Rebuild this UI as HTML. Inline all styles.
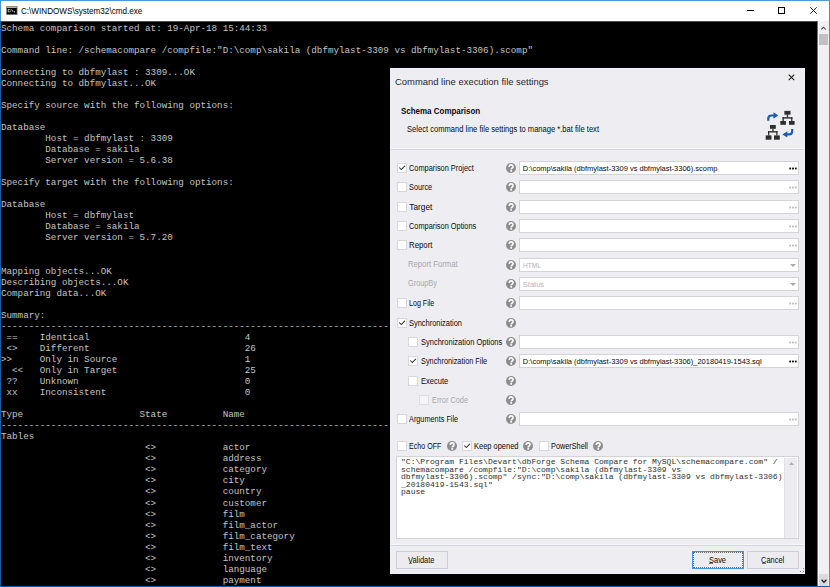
<!DOCTYPE html>
<html><head><meta charset="utf-8">
<style>
*{margin:0;padding:0;box-sizing:border-box}
html,body{width:830px;height:587px;overflow:hidden;background:#fff;position:relative;font-family:"Liberation Sans",sans-serif}
.abs{position:absolute}
#frame{position:absolute;left:0;top:0;width:830px;height:587px;border:1px solid #4a97df;border-right-color:#3d90da;border-left-color:#135fa8;border-bottom-color:#125ca4}
.t{position:absolute;white-space:pre;line-height:12px;transform-origin:0 0;color:#0a0a0a}
#con{position:absolute;left:1px;top:21px;width:817px;height:565px;background:#000;overflow:hidden}
#con pre{position:absolute;left:0;top:1.5px;font-family:"Liberation Mono",monospace;font-size:9.24px;line-height:11.05px;color:#c4c4c4;white-space:pre}
#sb{position:absolute;left:819px;top:21px;width:10px;height:565px;background:#f0f0f0}
#dlg{position:absolute;left:390px;top:68px;width:415px;height:506px;background:#eeeef2;box-shadow:inset 0 0 0 1px #eef0fc;color:#1e1e1e}
#dlg .cb{position:absolute;width:10px;height:10px;background:#fff;border:1px solid #d8d8dc}
#dlg .cb.dis{background:#f4f4f6;border-color:#e0e0e4}
#dlg .help{position:absolute}
#dlg .tb{position:absolute;left:129px;width:280px;height:14px;background:#fff;border:1px solid #d4d4d8}
#dlg .dots{position:absolute;left:268.5px;top:5px}
#dlg .dots i{position:absolute;top:0;width:1.6px;height:1.6px}
#dlg .arr{position:absolute;left:270px;top:5px}
#dlg .sep{position:absolute;left:1px;width:413px;height:1px;background:#d3d5e2;box-shadow:0 -1px 0 #f6f6f9}
#dlg .btn{position:absolute;top:483px;width:52px;height:18px;border:1px solid #ccced8;background:#ececf0}
#ta{position:absolute;left:6px;top:388px;width:403px;height:83px;background:#fff;border:1px solid #d4d4d8}
#ta pre{position:absolute;left:4px;top:1px;font-family:"Liberation Mono",monospace;font-size:8.05px;line-height:7.6px;color:#303030;white-space:pre}
#tasb{position:absolute;left:387px;top:1px;width:13px;height:80px;background:#ececf0;border-left:1px solid #e0e0e4}
</style></head><body>
<div id="frame"></div><div class="abs" style="left:0;top:0;width:1px;height:21px;background:#4a97df"></div>
<svg class="abs" style="left:6px;top:6px" width="12" height="9" viewBox="0 0 12 9">
<rect x="0.5" y="0.5" width="10.6" height="8.2" fill="#000" stroke="#8a8a8a" stroke-width="0.7"/>
<rect x="0.9" y="0.9" width="9.8" height="0.9" fill="#dcdcdc"/>
<path d="M3.7 3.5H2.2V5.9H3.7M5.5 3.4L7.2 6" fill="none" stroke="#d8d8d8" stroke-width="0.9"/>
<rect x="4.2" y="3.6" width="0.8" height="0.8" fill="#ccc"/><rect x="4.2" y="5.2" width="0.8" height="0.8" fill="#ccc"/><rect x="8" y="5.2" width="1.1" height="1.1" fill="#ddd"/>
</svg>
<div class="t" style="left:20.9px;top:4.7px;font-size:9.45px;transform:scaleX(0.86);color:#000;">C:\WINDOWS\system32\cmd.exe</div>
<div class="abs" style="left:747px;top:10px;width:7px;height:1px;background:#000"></div>
<div class="abs" style="left:778px;top:7px;width:7px;height:7px;border:1px solid #000"></div>
<svg class="abs" style="left:810px;top:7px" width="7" height="7" viewBox="0 0 7 7"><path d="M0.3 0.3L6.7 6.7M6.7 0.3L0.3 6.7" stroke="#000" stroke-width="0.9"/></svg>
<div id="con"><pre>Schema comparison started at: 19-Apr-18 15:44:33

Command line: /schemacompare /compfile:"D:\comp\sakila (dbfmylast-3309 vs dbfmylast-3306).scomp"

Connecting to dbfmylast : 3309...OK
Connecting to dbfmylast...OK

Specify source with the following options:

Database
        Host = dbfmylast : 3309
        Database = sakila
        Server version = 5.6.38

Specify target with the following options:

Database
        Host = dbfmylast
        Database = sakila
        Server version = 5.7.20


Mapping objects...OK
Describing objects...OK
Comparing data...OK

Summary:
--------------------------------------------------------------------------------------------------------------------------------------------
 ==    Identical                            4
 &lt;&gt;    Different                            26
&gt;&gt;     Only in Source                       1
  &lt;&lt;   Only in Target                       25
 ??    Unknown                              0
 xx    Inconsistent                         0

Type                     State          Name
--------------------------------------------------------------------------------------------------------------------------------------------
Tables
                          &lt;&gt;            actor
                          &lt;&gt;            address
                          &lt;&gt;            category
                          &lt;&gt;            city
                          &lt;&gt;            country
                          &lt;&gt;            customer
                          &lt;&gt;            film
                          &lt;&gt;            film_actor
                          &lt;&gt;            film_category
                          &lt;&gt;            film_text
                          &lt;&gt;            inventory
                          &lt;&gt;            language
                          &lt;&gt;            payment</pre><div style="position:absolute;left:0;top:0;width:817px;height:1px;background:#505050"></div><div style="position:absolute;left:816px;top:0;width:1px;height:565px;background:#707070"></div></div>
<div id="sb"><div style="position:absolute;left:0;top:13px;width:9px;height:11px;background:#c1c1c1"></div>
<svg style="position:absolute;left:2px;top:4.5px" width="5" height="4" viewBox="0 0 5 4"><path d="M0.4 3.5L2.5 1.2L4.6 3.5" fill="none" stroke="#4a4a4a" stroke-width="1.1"/></svg>
<div style="position:absolute;left:0;top:553px;width:9px;height:12px;background:#dadada"></div>
<svg style="position:absolute;left:1.5px;top:557.5px" width="6" height="5" viewBox="0 0 6 5"><path d="M0.6 0.8L3 3.4L5.4 0.8" fill="none" stroke="#1a1a1a" stroke-width="1.3"/></svg></div>
<div id="dlg">
<div class="t" style="left:5.4px;top:7.6px;font-size:9.9px;transform:scaleX(0.955);color:#1e1e2e;">Command line execution file settings</div>
<svg style="position:absolute;left:398px;top:6px" width="7" height="7" viewBox="0 0 7 7"><path d="M0.7 0.7L6.2 6.2M6.2 0.7L0.7 6.2" stroke="#1e1e1e" stroke-width="1.1"/></svg>
<div class="t" style="left:11.4px;top:37px;font-size:8.3px;transform:scaleX(0.96);font-weight:bold;">Schema Comparison</div>
<div class="t" style="left:16.7px;top:55px;font-size:8.3px;transform:scaleX(0.913);">Select command line file settings to manage *.bat file text</div>
<svg style="position:absolute;left:375px;top:42px" width="30" height="30" viewBox="0 0 30 30">
<g fill="#2e2e2e">
<rect x="19.4" y="0.9" width="6.1" height="3.8"/><rect x="21.8" y="4.5" width="1.3" height="3"/><rect x="17.5" y="7.2" width="9.9" height="1.4"/><rect x="17.5" y="7.2" width="1.3" height="3.9"/><rect x="26.1" y="7.2" width="1.3" height="3.9"/>
<rect x="15.3" y="11" width="5.6" height="3.8"/><rect x="24" y="11" width="5.6" height="3.8"/>
<rect x="5" y="15" width="5.8" height="3.8"/><rect x="7.3" y="18.6" width="1.3" height="2.7"/><rect x="3" y="21.1" width="9.5" height="1.4"/><rect x="3" y="21.1" width="1.3" height="4.4"/><rect x="11.2" y="21.1" width="1.3" height="4.4"/>
<rect x="0.7" y="25.4" width="5.8" height="4.3"/><rect x="9" y="25.4" width="5.8" height="4.3"/>
</g>
<g fill="none" stroke="#1a5cb5" stroke-width="2.2"><path d="M3.3 10.8V8.6Q3.3 5.5 6.6 5.5H9.5"/><path d="M27.2 18.9V21.3Q27.2 24.4 24 24.4H21.5"/></g>
<g fill="#1a5cb5"><path d="M8.5 2.3L13.4 5.5L8.5 8.7Z"/><path d="M22.3 21.2L17.4 24.4L22.3 27.6Z"/></g>
</svg>
<div class="sep" style="top:81px"></div>
<div class="cb" style="left:7px;top:95px"><svg width="10" height="10" viewBox="0 0 10 10" style="position:absolute;left:-1px;top:-1px"><path d="M2.3 4.5L4.3 6.6L7.9 2.9" fill="none" stroke="#303030" stroke-width="1.05"/></svg></div>
<div class="t" style="left:19.3px;top:94.4px;font-size:8.3px;transform:scaleX(0.89);">Comparison Project</div>
<svg class="help" style="left:116px;top:95px" width="10" height="10" viewBox="0 0 10 10"><circle cx="5" cy="5" r="5" fill="#8c8c8c"/><path d="M3.2 4Q3.2 1.9 5.1 1.9Q7 1.9 7 3.7Q7 4.7 6 5.2Q5.2 5.6 5.2 6.5" fill="none" stroke="#fff" stroke-width="1.6"/><rect x="4.3" y="7.1" width="1.8" height="1.6" fill="#fff"/></svg>
<div class="tb" style="top:93px"><div class="t" style="left:2.8px;top:1.0px;font-size:7.5px;">D:\comp\sakila (dbfmylast-3309 vs dbfmylast-3306).scomp</div><svg class="dots" width="10" height="4" viewBox="0 0 10 4"><g fill="#000"><rect x="0.3" y="0.6" width="1.8" height="1.8"/><rect x="3.1" y="0.6" width="1.8" height="1.8"/><rect x="5.9" y="0.6" width="1.8" height="1.8"/></g></svg></div>
<div class="cb" style="left:7px;top:114px"></div>
<div class="t" style="left:19.3px;top:113.4px;font-size:8.3px;transform:scaleX(0.882);">Source</div>
<svg class="help" style="left:116px;top:114px" width="10" height="10" viewBox="0 0 10 10"><circle cx="5" cy="5" r="5" fill="#8c8c8c"/><path d="M3.2 4Q3.2 1.9 5.1 1.9Q7 1.9 7 3.7Q7 4.7 6 5.2Q5.2 5.6 5.2 6.5" fill="none" stroke="#fff" stroke-width="1.6"/><rect x="4.3" y="7.1" width="1.8" height="1.6" fill="#fff"/></svg>
<div class="tb" style="top:112px"><div class="t" style="left:2.8px;top:1.0px;font-size:7.5px;"></div><svg class="dots" width="10" height="4" viewBox="0 0 10 4"><g fill="#b8b8b8"><rect x="0.3" y="0.6" width="1.8" height="1.8"/><rect x="3.1" y="0.6" width="1.8" height="1.8"/><rect x="5.9" y="0.6" width="1.8" height="1.8"/></g></svg></div>
<div class="cb" style="left:7px;top:134px"></div>
<div class="t" style="left:19.3px;top:133.4px;font-size:8.3px;">Target</div>
<svg class="help" style="left:116px;top:134px" width="10" height="10" viewBox="0 0 10 10"><circle cx="5" cy="5" r="5" fill="#8c8c8c"/><path d="M3.2 4Q3.2 1.9 5.1 1.9Q7 1.9 7 3.7Q7 4.7 6 5.2Q5.2 5.6 5.2 6.5" fill="none" stroke="#fff" stroke-width="1.6"/><rect x="4.3" y="7.1" width="1.8" height="1.6" fill="#fff"/></svg>
<div class="tb" style="top:132px"><div class="t" style="left:2.8px;top:1.0px;font-size:7.5px;"></div><svg class="dots" width="10" height="4" viewBox="0 0 10 4"><g fill="#b8b8b8"><rect x="0.3" y="0.6" width="1.8" height="1.8"/><rect x="3.1" y="0.6" width="1.8" height="1.8"/><rect x="5.9" y="0.6" width="1.8" height="1.8"/></g></svg></div>
<div class="cb" style="left:7px;top:153px"></div>
<div class="t" style="left:19.3px;top:152.4px;font-size:8.3px;transform:scaleX(0.889);">Comparison Options</div>
<svg class="help" style="left:116px;top:153px" width="10" height="10" viewBox="0 0 10 10"><circle cx="5" cy="5" r="5" fill="#8c8c8c"/><path d="M3.2 4Q3.2 1.9 5.1 1.9Q7 1.9 7 3.7Q7 4.7 6 5.2Q5.2 5.6 5.2 6.5" fill="none" stroke="#fff" stroke-width="1.6"/><rect x="4.3" y="7.1" width="1.8" height="1.6" fill="#fff"/></svg>
<div class="tb" style="top:151px"><div class="t" style="left:2.8px;top:1.0px;font-size:7.5px;"></div><svg class="dots" width="10" height="4" viewBox="0 0 10 4"><g fill="#b8b8b8"><rect x="0.3" y="0.6" width="1.8" height="1.8"/><rect x="3.1" y="0.6" width="1.8" height="1.8"/><rect x="5.9" y="0.6" width="1.8" height="1.8"/></g></svg></div>
<div class="cb" style="left:7px;top:172px"></div>
<div class="t" style="left:19.3px;top:171.4px;font-size:8.3px;transform:scaleX(0.943);">Report</div>
<svg class="help" style="left:116px;top:172px" width="10" height="10" viewBox="0 0 10 10"><circle cx="5" cy="5" r="5" fill="#8c8c8c"/><path d="M3.2 4Q3.2 1.9 5.1 1.9Q7 1.9 7 3.7Q7 4.7 6 5.2Q5.2 5.6 5.2 6.5" fill="none" stroke="#fff" stroke-width="1.6"/><rect x="4.3" y="7.1" width="1.8" height="1.6" fill="#fff"/></svg>
<div class="tb" style="top:170px"><div class="t" style="left:2.8px;top:1.0px;font-size:7.5px;"></div><svg class="dots" width="10" height="4" viewBox="0 0 10 4"><g fill="#b8b8b8"><rect x="0.3" y="0.6" width="1.8" height="1.8"/><rect x="3.1" y="0.6" width="1.8" height="1.8"/><rect x="5.9" y="0.6" width="1.8" height="1.8"/></g></svg></div>
<div class="t" style="left:17.7px;top:190.4px;font-size:8.3px;transform:scaleX(0.927);color:#a6a6ae;">Report Format</div>
<svg class="help" style="left:116px;top:192px" width="10" height="10" viewBox="0 0 10 10"><circle cx="5" cy="5" r="5" fill="#8c8c8c"/><path d="M3.2 4Q3.2 1.9 5.1 1.9Q7 1.9 7 3.7Q7 4.7 6 5.2Q5.2 5.6 5.2 6.5" fill="none" stroke="#fff" stroke-width="1.6"/><rect x="4.3" y="7.1" width="1.8" height="1.6" fill="#fff"/></svg>
<div class="tb" style="top:190px"><div class="t" style="left:2.8px;top:1.0px;font-size:7.5px;transform:scaleX(0.87);color:#b4b4bc;">HTML</div><svg class="arr" width="6" height="3" viewBox="0 0 6 3"><path d="M0 0H6L3 3Z" fill="#a8a8a8"/></svg></div>
<div class="t" style="left:17.7px;top:209.4px;font-size:8.3px;transform:scaleX(0.882);color:#a6a6ae;">GroupBy</div>
<svg class="help" style="left:116px;top:211px" width="10" height="10" viewBox="0 0 10 10"><circle cx="5" cy="5" r="5" fill="#8c8c8c"/><path d="M3.2 4Q3.2 1.9 5.1 1.9Q7 1.9 7 3.7Q7 4.7 6 5.2Q5.2 5.6 5.2 6.5" fill="none" stroke="#fff" stroke-width="1.6"/><rect x="4.3" y="7.1" width="1.8" height="1.6" fill="#fff"/></svg>
<div class="tb" style="top:209px"><div class="t" style="left:2.8px;top:1.0px;font-size:7.5px;color:#b4b4bc;">Status</div><svg class="arr" width="6" height="3" viewBox="0 0 6 3"><path d="M0 0H6L3 3Z" fill="#a8a8a8"/></svg></div>
<div class="cb" style="left:7px;top:230px"></div>
<div class="t" style="left:19.3px;top:229.4px;font-size:8.3px;transform:scaleX(0.857);">Log File</div>
<svg class="help" style="left:116px;top:230px" width="10" height="10" viewBox="0 0 10 10"><circle cx="5" cy="5" r="5" fill="#8c8c8c"/><path d="M3.2 4Q3.2 1.9 5.1 1.9Q7 1.9 7 3.7Q7 4.7 6 5.2Q5.2 5.6 5.2 6.5" fill="none" stroke="#fff" stroke-width="1.6"/><rect x="4.3" y="7.1" width="1.8" height="1.6" fill="#fff"/></svg>
<div class="tb" style="top:228px"><div class="t" style="left:2.8px;top:1.0px;font-size:7.5px;"></div><svg class="dots" width="10" height="4" viewBox="0 0 10 4"><g fill="#b8b8b8"><rect x="0.3" y="0.6" width="1.8" height="1.8"/><rect x="3.1" y="0.6" width="1.8" height="1.8"/><rect x="5.9" y="0.6" width="1.8" height="1.8"/></g></svg></div>
<div class="cb" style="left:7px;top:250px"><svg width="10" height="10" viewBox="0 0 10 10" style="position:absolute;left:-1px;top:-1px"><path d="M2.3 4.5L4.3 6.6L7.9 2.9" fill="none" stroke="#303030" stroke-width="1.05"/></svg></div>
<div class="t" style="left:19.3px;top:249.4px;font-size:8.3px;transform:scaleX(0.897);">Synchronization</div>
<svg class="help" style="left:116px;top:250px" width="10" height="10" viewBox="0 0 10 10"><circle cx="5" cy="5" r="5" fill="#8c8c8c"/><path d="M3.2 4Q3.2 1.9 5.1 1.9Q7 1.9 7 3.7Q7 4.7 6 5.2Q5.2 5.6 5.2 6.5" fill="none" stroke="#fff" stroke-width="1.6"/><rect x="4.3" y="7.1" width="1.8" height="1.6" fill="#fff"/></svg>
<div class="cb" style="left:18px;top:269px"></div>
<div class="t" style="left:30.9px;top:268.4px;font-size:8.3px;transform:scaleX(0.903);">Synchronization Options</div>
<svg class="help" style="left:116px;top:269px" width="10" height="10" viewBox="0 0 10 10"><circle cx="5" cy="5" r="5" fill="#8c8c8c"/><path d="M3.2 4Q3.2 1.9 5.1 1.9Q7 1.9 7 3.7Q7 4.7 6 5.2Q5.2 5.6 5.2 6.5" fill="none" stroke="#fff" stroke-width="1.6"/><rect x="4.3" y="7.1" width="1.8" height="1.6" fill="#fff"/></svg>
<div class="tb" style="top:267px"><div class="t" style="left:2.8px;top:1.0px;font-size:7.5px;"></div><svg class="dots" width="10" height="4" viewBox="0 0 10 4"><g fill="#b8b8b8"><rect x="0.3" y="0.6" width="1.8" height="1.8"/><rect x="3.1" y="0.6" width="1.8" height="1.8"/><rect x="5.9" y="0.6" width="1.8" height="1.8"/></g></svg></div>
<div class="cb" style="left:18px;top:288px"><svg width="10" height="10" viewBox="0 0 10 10" style="position:absolute;left:-1px;top:-1px"><path d="M2.3 4.5L4.3 6.6L7.9 2.9" fill="none" stroke="#303030" stroke-width="1.05"/></svg></div>
<div class="t" style="left:30.9px;top:287.4px;font-size:8.3px;transform:scaleX(0.886);">Synchronization File</div>
<svg class="help" style="left:116px;top:288px" width="10" height="10" viewBox="0 0 10 10"><circle cx="5" cy="5" r="5" fill="#8c8c8c"/><path d="M3.2 4Q3.2 1.9 5.1 1.9Q7 1.9 7 3.7Q7 4.7 6 5.2Q5.2 5.6 5.2 6.5" fill="none" stroke="#fff" stroke-width="1.6"/><rect x="4.3" y="7.1" width="1.8" height="1.6" fill="#fff"/></svg>
<div class="tb" style="top:286px"><div class="t" style="left:2.8px;top:1.0px;font-size:7.5px;">D:\comp\sakila (dbfmylast-3309 vs dbfmylast-3306)_20180419-1543.sql</div><svg class="dots" width="10" height="4" viewBox="0 0 10 4"><g fill="#000"><rect x="0.3" y="0.6" width="1.8" height="1.8"/><rect x="3.1" y="0.6" width="1.8" height="1.8"/><rect x="5.9" y="0.6" width="1.8" height="1.8"/></g></svg></div>
<div class="cb" style="left:18px;top:308px"></div>
<div class="t" style="left:30.9px;top:307.4px;font-size:8.3px;transform:scaleX(0.907);">Execute</div>
<svg class="help" style="left:116px;top:308px" width="10" height="10" viewBox="0 0 10 10"><circle cx="5" cy="5" r="5" fill="#8c8c8c"/><path d="M3.2 4Q3.2 1.9 5.1 1.9Q7 1.9 7 3.7Q7 4.7 6 5.2Q5.2 5.6 5.2 6.5" fill="none" stroke="#fff" stroke-width="1.6"/><rect x="4.3" y="7.1" width="1.8" height="1.6" fill="#fff"/></svg>
<div class="cb dis" style="left:29px;top:327px"></div>
<div class="t" style="left:41.8px;top:326.4px;font-size:8.3px;transform:scaleX(0.887);color:#a6a6ae;">Error Code</div>
<svg class="help" style="left:116px;top:327px" width="10" height="10" viewBox="0 0 10 10"><circle cx="5" cy="5" r="5" fill="#8c8c8c"/><path d="M3.2 4Q3.2 1.9 5.1 1.9Q7 1.9 7 3.7Q7 4.7 6 5.2Q5.2 5.6 5.2 6.5" fill="none" stroke="#fff" stroke-width="1.6"/><rect x="4.3" y="7.1" width="1.8" height="1.6" fill="#fff"/></svg>
<div class="cb" style="left:7px;top:346px"></div>
<div class="t" style="left:19.3px;top:345.4px;font-size:8.3px;transform:scaleX(0.881);">Arguments File</div>
<svg class="help" style="left:116px;top:346px" width="10" height="10" viewBox="0 0 10 10"><circle cx="5" cy="5" r="5" fill="#8c8c8c"/><path d="M3.2 4Q3.2 1.9 5.1 1.9Q7 1.9 7 3.7Q7 4.7 6 5.2Q5.2 5.6 5.2 6.5" fill="none" stroke="#fff" stroke-width="1.6"/><rect x="4.3" y="7.1" width="1.8" height="1.6" fill="#fff"/></svg>
<div class="tb" style="top:344px"><div class="t" style="left:2.8px;top:1.0px;font-size:7.5px;"></div><svg class="dots" width="10" height="4" viewBox="0 0 10 4"><g fill="#b8b8b8"><rect x="0.3" y="0.6" width="1.8" height="1.8"/><rect x="3.1" y="0.6" width="1.8" height="1.8"/><rect x="5.9" y="0.6" width="1.8" height="1.8"/></g></svg></div>
<div class="cb" style="left:7px;top:373px"></div><div class="t" style="left:19.4px;top:371.9px;font-size:8.3px;transform:scaleX(0.857);">Echo OFF</div><svg class="help" style="left:56.5px;top:373px" width="10" height="10" viewBox="0 0 10 10"><circle cx="5" cy="5" r="5" fill="#8c8c8c"/><path d="M3.2 4Q3.2 1.9 5.1 1.9Q7 1.9 7 3.7Q7 4.7 6 5.2Q5.2 5.6 5.2 6.5" fill="none" stroke="#fff" stroke-width="1.6"/><rect x="4.3" y="7.1" width="1.8" height="1.6" fill="#fff"/></svg><div class="cb" style="left:72px;top:373px"><svg width="10" height="10" viewBox="0 0 10 10" style="position:absolute;left:-1px;top:-1px"><path d="M2.3 4.5L4.3 6.6L7.9 2.9" fill="none" stroke="#303030" stroke-width="1.05"/></svg></div><div class="t" style="left:84.3px;top:371.9px;font-size:8.3px;transform:scaleX(0.901);">Keep opened</div><svg class="help" style="left:133.4px;top:373px" width="10" height="10" viewBox="0 0 10 10"><circle cx="5" cy="5" r="5" fill="#8c8c8c"/><path d="M3.2 4Q3.2 1.9 5.1 1.9Q7 1.9 7 3.7Q7 4.7 6 5.2Q5.2 5.6 5.2 6.5" fill="none" stroke="#fff" stroke-width="1.6"/><rect x="4.3" y="7.1" width="1.8" height="1.6" fill="#fff"/></svg><div class="cb" style="left:149px;top:373px"></div><div class="t" style="left:161px;top:371.9px;font-size:8.3px;transform:scaleX(0.881);">PowerShell</div><svg class="help" style="left:202.8px;top:373px" width="10" height="10" viewBox="0 0 10 10"><circle cx="5" cy="5" r="5" fill="#8c8c8c"/><path d="M3.2 4Q3.2 1.9 5.1 1.9Q7 1.9 7 3.7Q7 4.7 6 5.2Q5.2 5.6 5.2 6.5" fill="none" stroke="#fff" stroke-width="1.6"/><rect x="4.3" y="7.1" width="1.8" height="1.6" fill="#fff"/></svg>
<div id="ta"><pre>&quot;C:\Program Files\Devart\dbForge Schema Compare for MySQL\schemacompare.com&quot; /
schemacompare /compfile:&quot;D:\comp\sakila (dbfmylast-3309 vs
dbfmylast-3306).scomp&quot; /sync:&quot;D:\comp\sakila (dbfmylast-3309 vs dbfmylast-3306)
_20180419-1543.sql&quot;
pause</pre><div id="tasb"><svg style="position:absolute;left:3.5px;top:4px" width="5" height="3" viewBox="0 0 5 3"><path d="M0 3L2.5 0L5 3Z" fill="#b0b0b4"/></svg></div></div>
<div class="sep" style="top:477px"></div>
<div class="btn" style="left:6px"><div class="t" style="left:11px;top:2.0px;font-size:8.3px;transform:scaleX(0.9);">Validate</div><div style='position:absolute;left:11.6px;top:11px;width:3.6px;height:1px;background:#777'></div></div>
<div class="btn" style="left:302px;border-color:#3d92e6"><div style="position:absolute;left:0;top:0;right:0;bottom:0;border:1px dotted #6a6a6a"></div><div class="t" style="left:15.8px;top:2.0px;font-size:8.3px;transform:scaleX(0.9);">Save</div><div style='position:absolute;left:16.4px;top:11px;width:3.6px;height:1px;background:#777'></div></div>
<div style='position:absolute;left:412.5px;top:499.5px;width:1px;height:1px;background:#777'></div><div style='position:absolute;left:412.5px;top:502.5px;width:1px;height:1px;background:#777'></div><div style='position:absolute;left:409.5px;top:502.5px;width:1px;height:1px;background:#777'></div>
<div class="btn" style="left:357px"><div class="t" style="left:13px;top:2.0px;font-size:8.3px;transform:scaleX(0.9);">Cancel</div><div style='position:absolute;left:13.6px;top:11px;width:4px;height:1px;background:#777'></div></div>
</div>
</body></html>
